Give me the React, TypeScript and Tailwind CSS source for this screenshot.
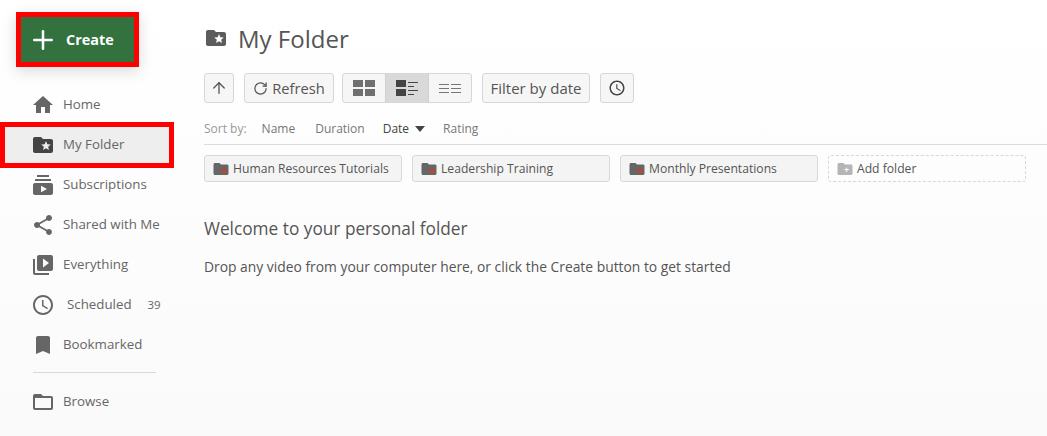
import React from 'react';
import { ArrowUp, RotateCw, Plus } from 'lucide-react';

const FONT = "font-['Open_Sans',sans-serif]";

const PATHS = {
  home: 'M10 20v-6h4v6h5v-8h3L12 3 2 12h3v8z',
  star: 'M20 6h-8l-2-2H4c-1.1 0-1.99.9-1.99 2L2 18c0 1.1.9 2 2 2h16c1.1 0 2-.9 2-2V8c0-1.1-.9-2-2-2zm-2.06 11L15 15.28 12.06 17l.78-3.33-2.59-2.24 3.41-.29L15 8l1.34 3.14 3.41.29-2.59 2.24.78 3.33z',
  subs: 'M20 8H4V6h16v2zm-2-6H6v2h12V2zm4 10v8c0 1.1-.9 2-2 2H4c-1.1 0-2-.9-2-2v-8c0-1.1.9-2 2-2h16c1.1 0 2 .9 2 2zm-6 4l-6-3.27v6.53L16 16z',
  share: 'M18 16.08c-.76 0-1.44.3-1.96.77L8.91 12.7c.05-.23.09-.46.09-.7s-.04-.47-.09-.7l7.05-4.11c.54.5 1.25.81 2.04.81 1.66 0 3-1.34 3-3s-1.34-3-3-3-3 1.34-3 3c0 .24.04.47.09.7L8.04 9.81C7.5 9.31 6.79 9 6 9c-1.66 0-3 1.34-3 3s1.34 3 3 3c.79 0 1.5-.31 2.04-.81l7.12 4.16c-.05.21-.08.43-.08.65 0 1.61 1.31 2.92 2.92 2.92 1.61 0 2.92-1.31 2.92-2.92s-1.31-2.92-2.92-2.92z',
  library: 'M4 6H2v14c0 1.1.9 2 2 2h14v-2H4V6zm16-4H8c-1.1 0-2 .9-2 2v12c0 1.1.9 2 2 2h12c1.1 0 2-.9 2-2V4c0-1.1-.9-2-2-2zm-8 12.5v-9l6 4.5-6 4.5z',
  clock: 'M11.99 2C6.47 2 2 6.48 2 12s4.47 10 9.99 10C17.52 22 22 17.52 22 12S17.52 2 11.99 2zM12 20c-4.42 0-8-3.58-8-8s3.58-8 8-8 8 3.58 8 8-3.58 8-8 8zm.5-13H11v6l5.25 3.15.75-1.23-4.5-2.67z',
  bookmark: 'M17 3H7c-1.1 0-2 .9-2 2v16l7-3 7 3V5c0-1.1-.9-2-2-2z',
  browse: 'M20 6h-8l-2-2H4c-1.1 0-1.99.9-1.99 2L2 18c0 1.1.9 2 2 2h16c1.1 0 2-.9 2-2V8c0-1.1-.9-2-2-2zm0 12H4V8h16v10z',
  folder: 'M10 4H4c-1.1 0-1.99.9-1.99 2L2 18c0 1.1.9 2 2 2h16c1.1 0 2-.9 2-2V8c0-1.1-.9-2-2-2h-8l-2-2z',
};

const Icon = ({ d, className }: { d: string; className: string }) => (
  <svg viewBox="0 0 24 24" fill="currentColor" className={className}>
    <path d={d} />
  </svg>
);

const NavItem = ({ icon, label, textClass = 'ml-[10px]', badge }: { icon: string; label: string; textClass?: string; badge?: string }) => (
  <div className="h-10 pl-[33px] flex items-center text-[#666]">
    <Icon d={icon} className="w-5 h-5 shrink-0 scale-[1.2]" />
    <span className={`${textClass} text-[13.3px] text-[#666]`}>{label}</span>
    {badge && <span className="ml-[16px] text-[11.5px] text-[#666]">{badge}</span>}
  </div>
);

const FolderChip = ({ label }: { label: string }) => (
  <div className="w-[198px] h-[27px] flex items-center pl-2 bg-[#f4f4f4] border border-[#d8d8d8] rounded-[3px] text-[12.15px] text-[#555]">
    <span className="relative w-4 h-4 flex items-center justify-center">
      <Icon d={PATHS.folder} className="w-[18px] h-[18px] shrink-0 text-[#666]" />
      <span className="absolute left-[9px] top-[8px] w-[4px] h-[4px] rounded-full bg-[#e8380d]" />
    </span>
    <span className="ml-[4px] pt-[2px]">{label}</span>
  </div>
);

const ToolButton = ({ className, children }: { className: string; children: React.ReactNode }) => (
  <div className={`h-[30px] flex items-center justify-center bg-[#f6f6f6] border border-[#d6d6d6] rounded-[3px] text-[#555] ${className}`}>
    {children}
  </div>
);

export default function App() {
  return (
    <div className={`${FONT} w-[1047px] h-[436px] overflow-hidden flex bg-gradient-to-b from-white to-[#fafafa]`}>
      {/* Sidebar */}
      <aside className="w-[204px] shrink-0">
        <div className="ml-4 mt-3 mb-[18px] w-[123px] h-[55px] flex items-center border-[5px] border-[#ff0000] bg-[#33723f] shadow-[0_4px_14px_rgba(0,0,0,0.15)] text-white">
          <Plus className="ml-[7px] w-[30px] h-[30px]" strokeWidth={2} />
          <span className="ml-[8px] text-[14.4px] font-bold">Create</span>
        </div>
        <NavItem icon={PATHS.home} label="Home" />
        <div className="w-[174px] h-[46px] -my-[3px] relative border-[5px] border-[#ff0000] bg-[#eeeeee] pl-[28px] flex items-center text-[#444]">
          <Icon d={PATHS.star} className="w-5 h-5 shrink-0 scale-[1.2]" />
          <span className="ml-[10px] text-[13.3px] text-[#666]">My Folder</span>
        </div>
        <NavItem icon={PATHS.subs} label="Subscriptions" />
        <NavItem icon={PATHS.share} label="Shared with Me" />
        <NavItem icon={PATHS.library} label="Everything" />
        <NavItem icon={PATHS.clock} label="Scheduled" textClass="ml-[14px]" badge="39" />
        <NavItem icon={PATHS.bookmark} label="Bookmarked" />
        <div className="ml-[33px] mt-[7px] mb-[9px] w-[123px] h-px bg-[#d8d8d8]" />
        <NavItem icon={PATHS.browse} label="Browse" />
      </aside>

      {/* Main */}
      <main className="flex-1 min-w-0">
        <div className="h-[73px] flex items-start pt-[23px]">
          <Icon d={PATHS.star} className="w-6 h-6 mt-[3px] text-[#5c5c5c]" />
          <h1 className="ml-[10px] text-[24px] leading-[32px] font-normal text-[#555]">My Folder</h1>
        </div>

        <div className="flex items-center">
          <ToolButton className="w-[30px]">
            <ArrowUp className="w-[18px] h-[18px]" strokeWidth={1.75} />
          </ToolButton>
          <ToolButton className="ml-[10px] w-[90px] text-[14.7px]">
            <RotateCw className="w-[15px] h-[15px] mr-[4px]" strokeWidth={2} />
            Refresh
          </ToolButton>
          <div className="ml-2 w-[130px] h-[30px] flex border border-[#d6d6d6] rounded-[3px] bg-[#f6f6f6]">
            <div className="flex-1 flex items-center justify-center">
              <div className="grid grid-cols-2 gap-[2px] w-[22px]">
                <div className="h-[7px] bg-[#707070]" />
                <div className="h-[7px] bg-[#707070]" />
                <div className="h-[7px] bg-[#707070]" />
                <div className="h-[7px] bg-[#707070]" />
              </div>
            </div>
            <div className="flex-1 flex items-center justify-center gap-[2px] bg-[#d9d9d9] border-x border-[#cfcfcf]">
              <div className="flex flex-col gap-[2px]">
                <div className="w-[10px] h-[7px] bg-[#444]" />
                <div className="w-[10px] h-[7px] bg-[#444]" />
              </div>
              <div className="flex flex-col gap-[3px]">
                <div className="w-[10px] h-px bg-[#444]" />
                <div className="w-[6px] h-px bg-[#444]" />
                <div className="w-[10px] h-px bg-[#444]" />
                <div className="w-[6px] h-px bg-[#444]" />
              </div>
            </div>
            <div className="flex-1 flex items-center justify-center gap-[2px]">
              {[0, 1].map((i) => (
                <div key={i} className="flex flex-col gap-[3px]">
                  <div className="w-[10px] h-px bg-[#777]" />
                  <div className="w-[10px] h-px bg-[#777]" />
                  <div className="w-[10px] h-px bg-[#777]" />
                </div>
              ))}
            </div>
          </div>
          <ToolButton className="ml-[10px] w-[108px] text-[15px]">Filter by date</ToolButton>
          <ToolButton className="ml-[10px] w-[34px]">
            <Icon d={PATHS.clock} className="w-[18px] h-[18px] text-[#444]" />
          </ToolButton>
        </div>

        <div className="mt-[13px] h-[26px] flex items-center border-b border-[#dcdcdc] pb-[2px] box-content text-[12px] text-[#777]">
          <span className="text-[#999]">Sort by:</span>
          <span className="ml-[15px]">Name</span>
          <span className="ml-[20px]">Duration</span>
          <span className="ml-[18px] text-[#444]">Date</span>
          <span className="ml-[6px] w-0 h-0 border-x-[5px] border-x-transparent border-t-[6px] border-t-[#444]" />
          <span className="ml-[18px]">Rating</span>
        </div>

        <div className="mt-[10px] flex gap-[10px]">
          <FolderChip label="Human Resources Tutorials" />
          <FolderChip label="Leadership Training" />
          <FolderChip label="Monthly Presentations" />
          <div className="w-[198px] h-[27px] flex items-center pl-2 border border-dashed border-[#d8d8d8] rounded-[3px] text-[12.15px] text-[#555]">
            <span className="relative w-4 h-4 flex items-center justify-center">
              <Icon d={PATHS.folder} className="w-[18px] h-[18px] shrink-0 text-[#b5b5b5]" />
              <span className="absolute left-[7px] top-[3px] text-[9px] leading-[12px] font-bold text-white">+</span>
            </span>
            <span className="ml-[4px] pt-[2px]">Add folder</span>
          </div>
        </div>

        <h2 className="mt-[35px] text-[17.25px] leading-[24px] font-normal text-[#555]">Welcome to your personal folder</h2>
        <p className="mt-[16px] text-[13.85px] leading-[20px] text-[#555]">
          Drop any video from your computer here, or click the Create button to get started
        </p>
      </main>
    </div>
  );
}
